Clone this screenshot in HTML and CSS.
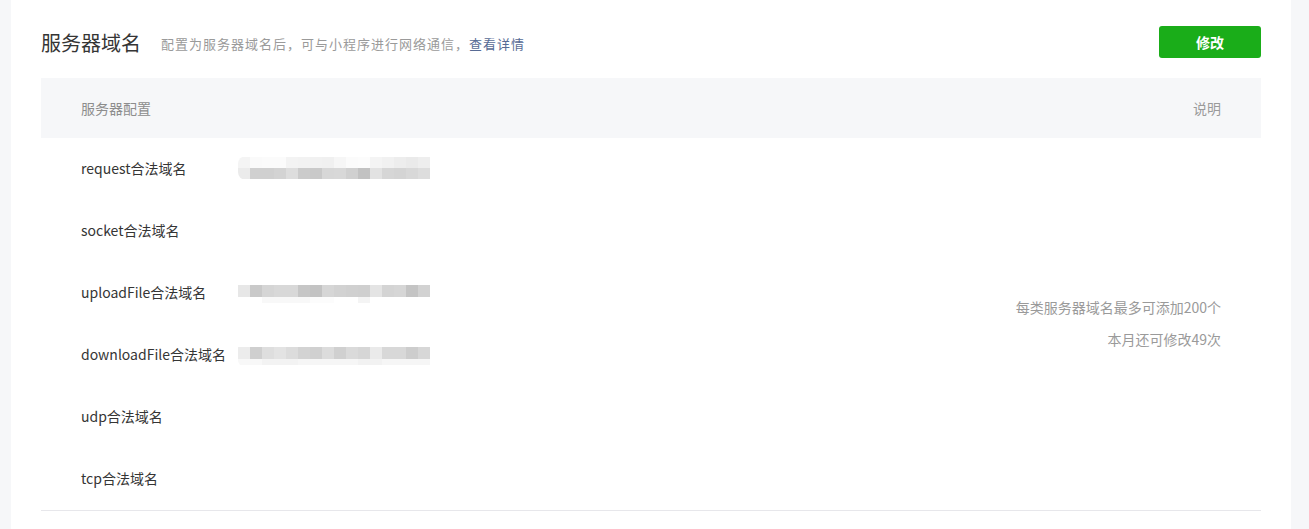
FILE: index.html
```html
<!DOCTYPE html>
<html lang="zh-CN">
<head>
  <meta charset="UTF-8">
  <title>服务器域名</title>
  <link rel="stylesheet" href="styles.css">
</head>
<body>
  <div class="page">
    <div class="panel">
      <!-- Header -->
      <div class="panel-head">
        <h2 class="panel-title">服务器域名</h2>
        <p class="panel-tips">配置为服务器域名后，可与小程序进行网络通信，<a href="#" class="link">查看详情</a></p>
        <a href="#" class="btn-primary">修改</a>
      </div>

      <!-- Domain table -->
      <table class="domain-table">
        <thead>
          <tr>
            <th class="col-label" colspan="2">服务器配置</th>
            <th class="col-desc">说明</th>
          </tr>
        </thead>
        <tbody>
          <tr>
            <td class="col-label">request合法域名</td>
            <td class="col-value"><div class="mosaic mosaic-request"></div></td>
            <td class="col-desc" rowspan="6">
              <p>每类服务器域名最多可添加200个</p>
              <p>本月还可修改49次</p>
            </td>
          </tr>
          <tr>
            <td class="col-label">socket合法域名</td>
            <td class="col-value"></td>
          </tr>
          <tr>
            <td class="col-label">uploadFile合法域名</td>
            <td class="col-value"><div class="mosaic mosaic-upload"></div></td>
          </tr>
          <tr>
            <td class="col-label">downloadFile合法域名</td>
            <td class="col-value"><div class="mosaic mosaic-download"></div></td>
          </tr>
          <tr>
            <td class="col-label">udp合法域名</td>
            <td class="col-value"></td>
          </tr>
          <tr>
            <td class="col-label">tcp合法域名</td>
            <td class="col-value"></td>
          </tr>
        </tbody>
      </table>
    </div>
  </div>
</body>
</html>
```

FILE: styles.css
```css
/* Base */
body {
  margin: 0;
  background: #f6f7f9;
  font-family: "Noto Sans CJK SC", "Microsoft YaHei", sans-serif;
  color: #353535;
}

.page {
  padding: 0 18px 0 11px;
  height: 529px;
  overflow: hidden;
}

.panel {
  background: #fff;
  padding: 26px 30px 40px;
  min-height: 529px;
  box-sizing: border-box;
}

/* Header */
.panel-head {
  display: flex;
  align-items: center;
  height: 32px;
  margin-bottom: 20px;
}

.panel-title {
  margin: 0 20px 0 0;
  font-size: 20px;
  font-weight: normal;
  color: #353535;
  line-height: 32px;
  position: relative;
  top: 1px;
}

.panel-tips {
  margin: 0;
  font-size: 13px;
  letter-spacing: 1px;
  color: #9a9a9a;
  flex: 1;
  position: relative;
  top: 1px;
}

.link {
  color: #576b95;
  text-decoration: none;
}

.btn-primary {
  display: block;
  width: 102px;
  height: 32px;
  line-height: 32px;
  text-align: center;
  background: #1aad19;
  border-radius: 3px;
  color: #fff;
  font-size: 14px;
  font-weight: bold;
  text-decoration: none;
}

/* Table */
.domain-table {
  width: 100%;
  border-collapse: collapse;
  font-size: 14px;
  border-bottom: 1px solid #e7e7eb;
}

.domain-table th {
  height: 60px;
  padding: 0;
  background: #f6f7f9;
  font-weight: normal;
  color: #8d8d8d;
  text-align: left;
}

.domain-table td {
  height: 60px;
  padding: 0 0 2px;
}

.domain-table .col-label {
  padding-left: 40px;
  width: 157px;
  white-space: nowrap;
  color: #353535;
}

.domain-table th.col-label {
  color: #8d8d8d;
}

.domain-table .col-value {
  width: 192px;
}

.domain-table .col-desc {
  text-align: right;
  padding-right: 40px;
  color: #9a9a9a;
  vertical-align: middle;
}

.domain-table td.col-desc p {
  margin: 0;
  line-height: 32px;
}

/* Blurred (mosaic) domain values */
.mosaic {
  width: 192px;
  height: 24px;
}

.mosaic-request {
  border-radius: 8px 0 0 8px;
  background:
    linear-gradient(90deg,
      #f4f4f4 0 12px, #fafafa 12px 24px, #fbfbfb 24px 36px, #fbfbfb 36px 48px,
      #f3f3f3 48px 60px, #f2f2f2 60px 72px, #f1f1f1 72px 84px, #f0f0f0 84px 96px,
      #f6f6f6 96px 108px, #fbfbfb 108px 120px, #fcfcfc 120px 132px, #f4f4f4 132px 144px,
      #f1f1f1 144px 156px, #ededed 156px 168px, #eaeaea 168px 180px, #eeeeee 180px 192px)
      0 1px / 100% 11px no-repeat,
    linear-gradient(90deg,
      #ebebeb 0 12px, #d0d0d0 12px 24px, #d0d0d0 24px 36px, #d3d3d3 36px 48px,
      #dddddd 48px 60px, #cbcbcb 60px 72px, #c9c9c9 72px 84px, #d7d7d7 84px 96px,
      #d8d8d8 96px 108px, #d0d0d0 108px 120px, #c2c2c2 120px 132px, #e2e2e2 132px 144px,
      #d6d6d6 144px 156px, #d4d4d4 156px 168px, #d8d8d8 168px 180px, #dddddd 180px 192px)
      0 12px / 100% 11px no-repeat;
}

.mosaic-upload {
  background:
    linear-gradient(90deg,
      #e7e7e7 0 12px, #c9c9c9 12px 24px, #d5d5d5 24px 36px, #d8d8d8 36px 48px,
      #d8d8d8 48px 60px, #c6c6c6 60px 72px, #c3c3c3 72px 84px, #d6d6d6 84px 96px,
      #d2d2d2 96px 108px, #d0d0d0 108px 120px, #cfcfcf 120px 132px, #e4e4e4 132px 144px,
      #d4d4d4 144px 156px, #d6d6d6 156px 168px, #c4c4c4 168px 180px, #d2d2d2 180px 192px)
      0 5px / 100% 12px no-repeat,
    linear-gradient(90deg,
      #fff 0 24px, #f8f8f8 24px 72px, #fcfcfc 72px 96px, #fff 96px 120px,
      #f4f4f4 120px 132px, #fff 132px 192px)
      0 17px / 100% 6px no-repeat;
}

.mosaic-download {
  border-radius: 6px 0 0 6px;
  background:
    linear-gradient(90deg,
      #ececec 0 12px, #cfcfcf 12px 24px, #dedede 24px 36px, #e3e3e3 36px 48px,
      #dcdcdc 48px 60px, #d3d3d3 60px 72px, #d0d0d0 72px 84px, #dcdcdc 84px 96px,
      #d0d0d0 96px 108px, #dadada 108px 120px, #d6d6d6 120px 132px, #eaeaea 132px 144px,
      #d8d8d8 144px 156px, #d8d8d8 156px 168px, #cdcdcd 168px 180px, #d7d7d7 180px 192px)
      0 5px / 100% 12px no-repeat,
    linear-gradient(90deg,
      #f8f8f8 0 24px, #f3f3f3 24px 60px, #f6f6f6 60px 120px, #f2f2f2 120px 144px,
      #f6f6f6 144px 192px)
      0 17px / 100% 6px no-repeat;
}
```
